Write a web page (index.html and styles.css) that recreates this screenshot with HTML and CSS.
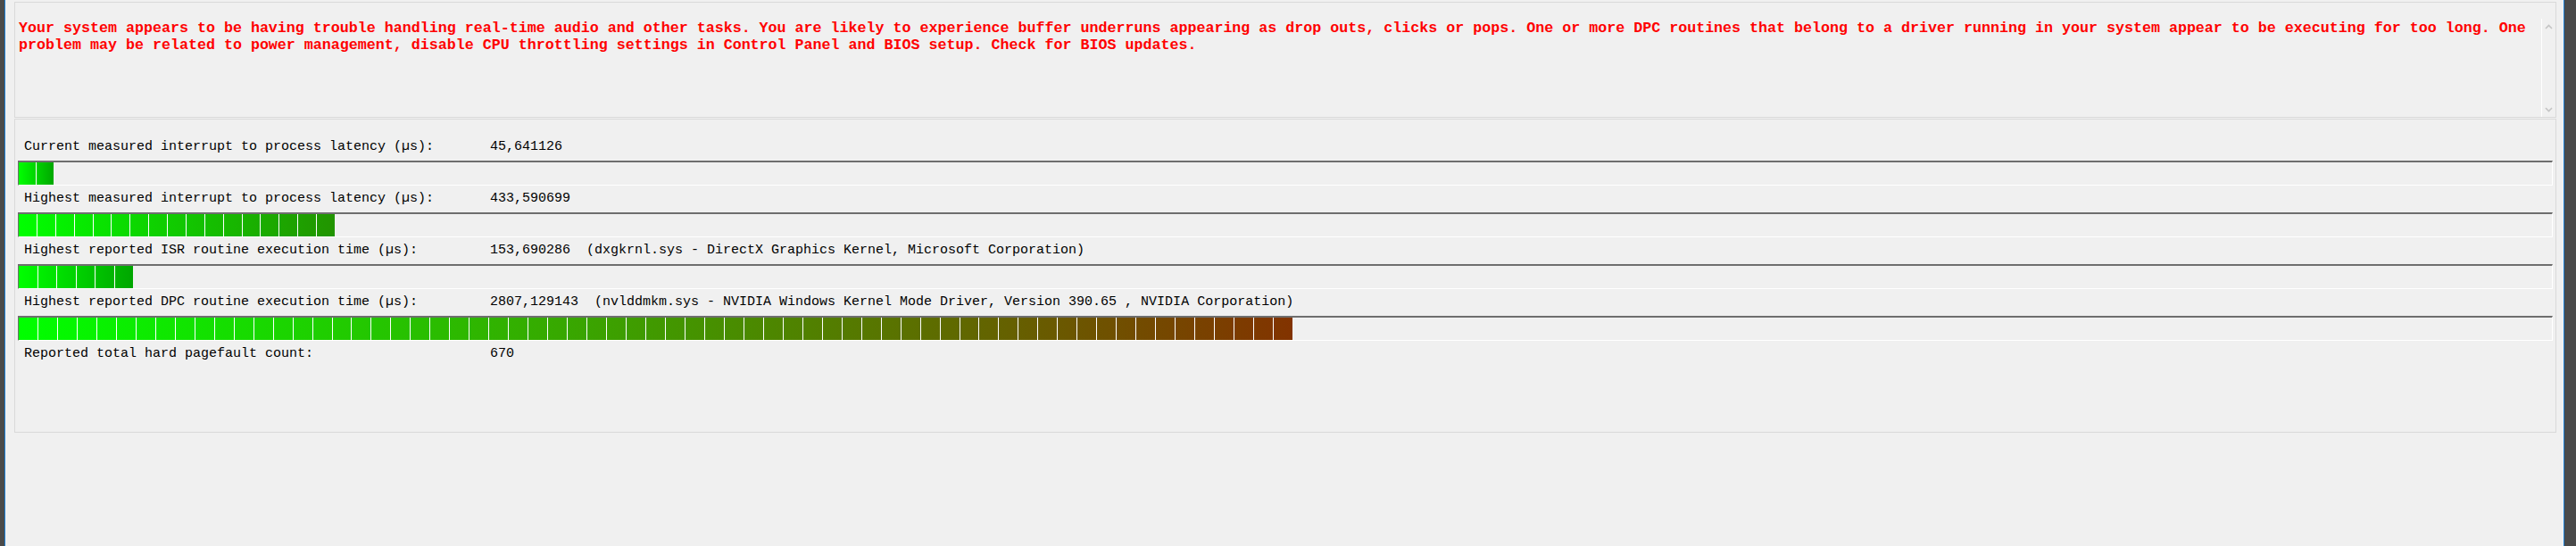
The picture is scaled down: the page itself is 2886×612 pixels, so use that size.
FILE: index.html
```html
<!DOCTYPE html>
<html lang="en">
<head>
<meta charset="utf-8">
<title>LatencyMon - Main</title>
<link rel="stylesheet" href="styles.css">
</head>
<body>
<div class="window">
  <div class="edge edge-left"></div>
  <main class="content">
    <section class="box msg-box">
      <div class="msg">
        <p class="msg-text">Your system appears to be having trouble handling real-time audio and other tasks. You are likely to experience buffer underruns appearing as drop outs, clicks or pops. One or more DPC routines that belong to a driver running in your system appear to be executing for too long. One problem may be related to power management, disable CPU throttling settings in Control Panel and BIOS setup. Check for BIOS updates.</p>
        <div class="vscroll">
          <svg class="arrow" width="9" height="6" viewBox="0 0 9 6"><polyline points="1,5 4.5,1.5 8,5" fill="none" stroke="#c4c4c4" stroke-width="1.6"/></svg>
          <svg class="arrow" width="9" height="6" viewBox="0 0 9 6"><polyline points="1,1 4.5,4.5 8,1" fill="none" stroke="#c4c4c4" stroke-width="1.6"/></svg>
        </div>
      </div>
    </section>
    <section class="box stats">
      <div class="row"><span class="label">Current measured interrupt to process latency (µs):</span><span class="value">45,641126</span></div>
      <div class="bar"><div class="fill" style="width:39px; --end:#00a800"><i></i><i></i></div></div>
      <div class="row"><span class="label">Highest measured interrupt to process latency (µs):</span><span class="value">433,590699</span></div>
      <div class="bar"><div class="fill" style="width:354px; --end:#229400"><i></i><i></i><i></i><i></i><i></i><i></i><i></i><i></i><i></i><i></i><i></i><i></i><i></i><i></i><i></i><i></i><i></i></div></div>
      <div class="row"><span class="label">Highest reported ISR routine execution time (µs):</span><span class="value">153,690286  (dxgkrnl.sys - DirectX Graphics Kernel, Microsoft Corporation)</span></div>
      <div class="bar"><div class="fill" style="width:128px; --end:#00a600"><i></i><i></i><i></i><i></i><i></i><i></i></div></div>
      <div class="row"><span class="label">Highest reported DPC routine execution time (µs):</span><span class="value">2807,129143  (nvlddmkm.sys - NVIDIA Windows Kernel Mode Driver, Version 390.65 , NVIDIA Corporation)</span></div>
      <div class="bar"><div class="fill" style="width:1427px; --end:#823300"><i></i><i></i><i></i><i></i><i></i><i></i><i></i><i></i><i></i><i></i><i></i><i></i><i></i><i></i><i></i><i></i><i></i><i></i><i></i><i></i><i></i><i></i><i></i><i></i><i></i><i></i><i></i><i></i><i></i><i></i><i></i><i></i><i></i><i></i><i></i><i></i><i></i><i></i><i></i><i></i><i></i><i></i><i></i><i></i><i></i><i></i><i></i><i></i><i></i><i></i><i></i><i></i><i></i><i></i><i></i><i></i><i></i><i></i><i></i><i></i><i></i><i></i><i></i><i></i><i></i></div></div>
      <div class="row"><span class="label">Reported total hard pagefault count:</span><span class="value">670</span></div>
    </section>
  </main>
  <div class="edge edge-right"></div>
</div>
</body>
</html>
```

FILE: styles.css
```css
html, body {
  margin: 0;
  padding: 0;
}

body {
  background: #f0f0f0;
  width: 2886px;
  height: 612px;
  overflow: hidden;
}

.window {
  display: flex;
  height: 612px;
}

.edge {
  background: #4a4a4a;
  flex: none;
}

.edge-left {
  width: 5px;
  border-right: 1px solid #1c7fd6;
}

.edge-right {
  width: 13px;
  border-left: 1px solid #1c7fd6;
}

.content {
  flex: 1;
  min-width: 0;
  padding: 2px 8px 0 10px;
  display: flex;
  flex-direction: column;
}

.box {
  box-sizing: border-box;
  border: 1px solid #d9d9d9;
}

.msg-box {
  height: 130px;
  padding-top: 18px;
}

.msg {
  display: flex;
  height: 110px;
}

.msg-text {
  flex: 1;
  margin: 0;
  padding: 1px 0 0 4px;
  color: #ff0000;
  font-family: "Courier New", "Liberation Mono", monospace;
  font-weight: bold;
  font-size: 16.667px;
  line-height: 19px;
}

.vscroll {
  width: 16px;
  border-left: 1px solid #ffffff;
  display: flex;
  flex-direction: column;
  justify-content: space-between;
  align-items: center;
  padding: 6px 0 5px;
  box-sizing: border-box;
}

.arrow {
  display: block;
}

.stats {
  margin-top: 1px;
  height: 352px;
  padding: 16px 3px 0 3px;
}

.row {
  display: grid;
  grid-template-columns: 522px auto;
  padding-left: 7px;
  height: 30px;
  line-height: 29px;
  font-family: "Courier New", "Liberation Mono", monospace;
  font-size: 15px;
  color: #000;
  white-space: pre;
}

.bar {
  box-sizing: border-box;
  height: 28px;
  border-top: 2px solid #6e6e6e;
  border-left: 1px solid #6e6e6e;
  border-bottom: 1px solid #ffffff;
  border-right: 1px solid #ffffff;
}

.fill {
  display: flex;
  height: 100%;
  background: linear-gradient(to right, #00ff00, var(--end));
}

.fill i {
  flex: 1;
  border-right: 1px solid #ffffff;
}

.fill i:last-child {
  border-right: 0;
}
```
